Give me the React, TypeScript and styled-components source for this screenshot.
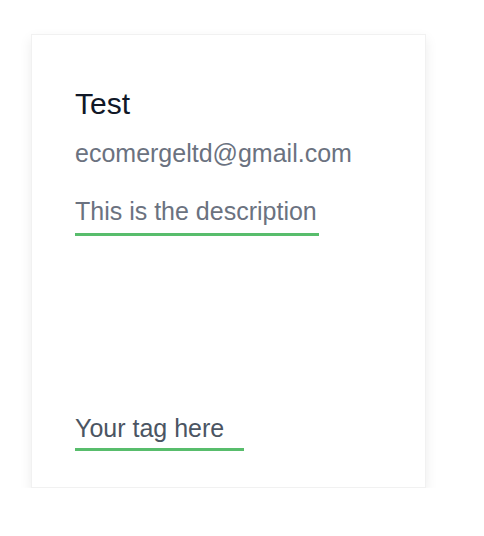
import React from "react";
import styled, { createGlobalStyle } from "styled-components";

const Global = createGlobalStyle`
  html, body { margin: 0; padding: 0; background: #ffffff; }
  body { font-family: "Liberation Sans", Arial, sans-serif; }
`;

const Card = styled.div`
  box-sizing: border-box;
  margin: 34px 0 0 31px;
  width: 395px;
  height: 454px;
  background: #ffffff;
  border: 1px solid #f1f1f1;
  box-shadow: 0 5px 12px rgba(0, 0, 0, 0.08);
  padding: 54px 36px 36px 43px;
  display: flex;
  flex-direction: column;
  align-items: flex-start;
`;

const Title = styled.div`
  font-size: 30px;
  line-height: 1;
  color: #111827;
`;

const Email = styled.div`
  margin-top: 22px;
  font-size: 25px;
  line-height: 1;
  color: #6b7280;
`;

const Underlined = styled.div<{ $w: number; $gap: number; $color: string }>`
  width: ${(p) => p.$w}px;
  box-sizing: border-box;
  font-size: 25px;
  line-height: 1;
  color: ${(p) => p.$color};
  padding-bottom: ${(p) => p.$gap}px;
  border-bottom: 3px solid #58bd6c;
  white-space: nowrap;
`;

const Description = styled(Underlined)`
  margin-top: 33px;
`;

const Tag = styled(Underlined)`
  margin-top: auto;
`;

export default function App() {
  return (
    <>
      <Global />
      <Card>
        <Title>Test</Title>
        <Email>ecomergeltd@gmail.com</Email>
        <Description $w={244} $gap={9} $color="#6b7280">
          This is the description
        </Description>
        <Tag $w={169} $gap={7} $color="#4b5563">
          Your tag here
        </Tag>
      </Card>
    </>
  );
}
